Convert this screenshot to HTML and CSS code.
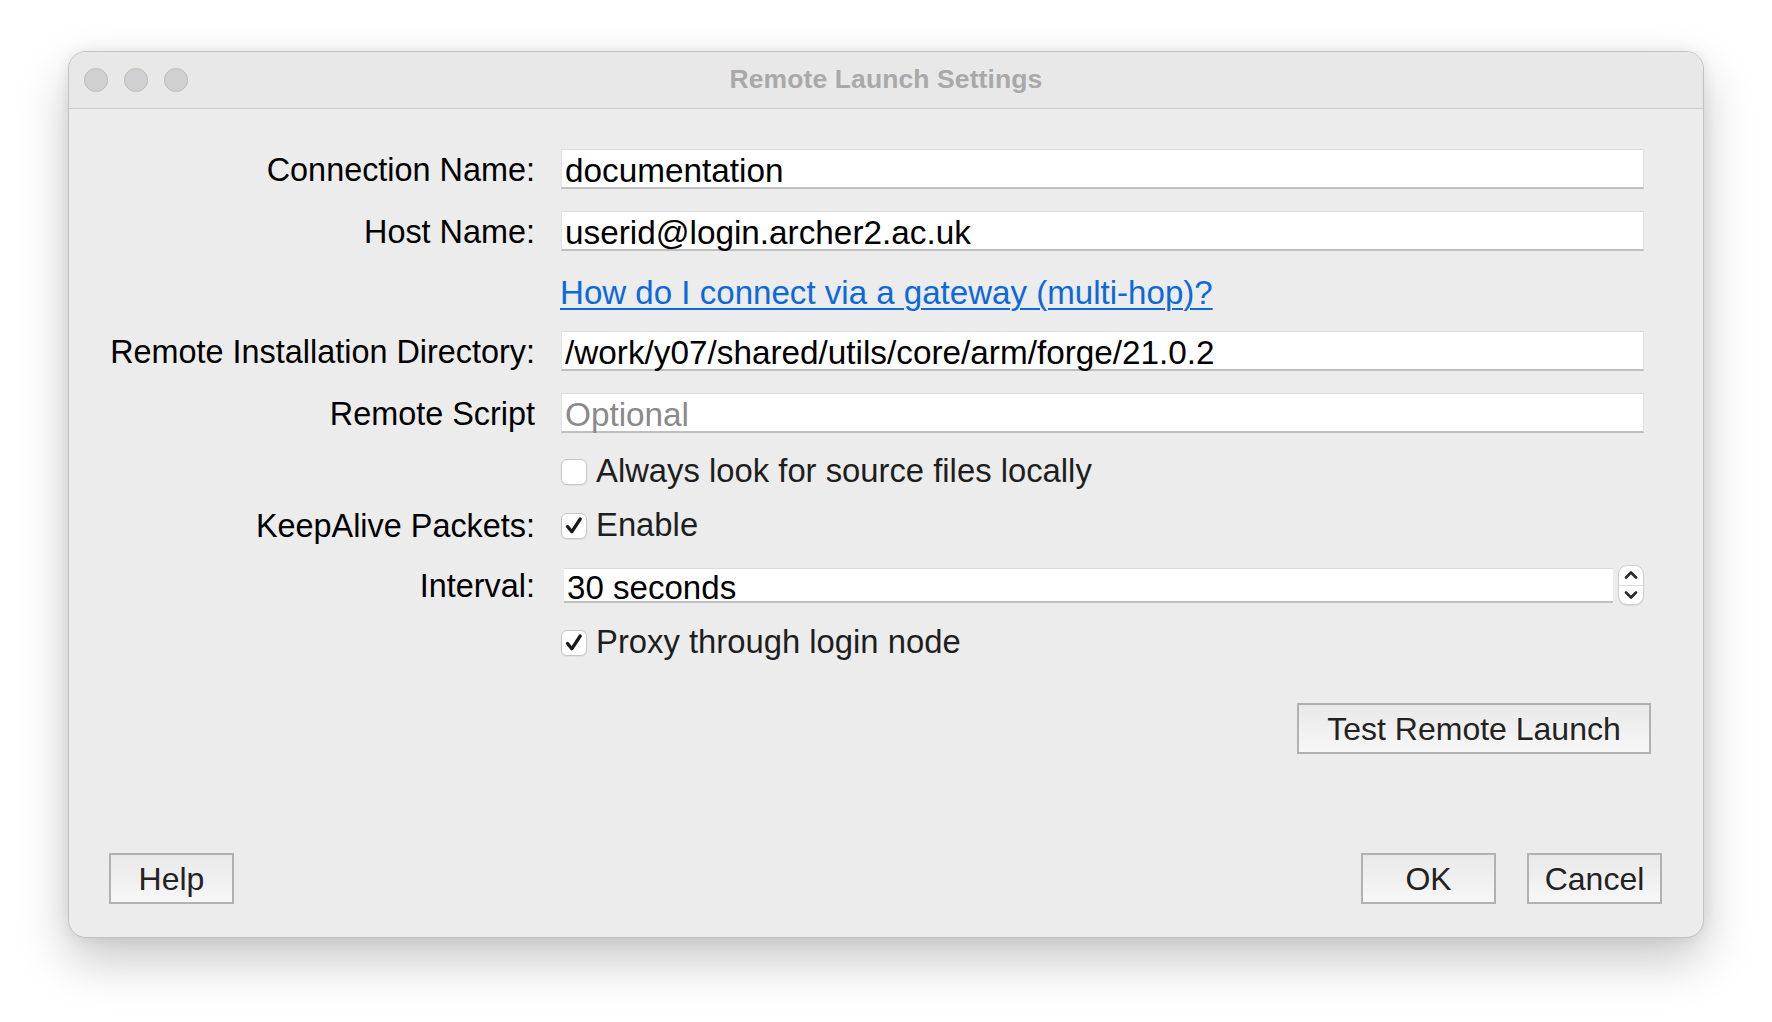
FILE: index.html
```html
<!DOCTYPE html>
<html lang="en">
<head>
<meta charset="utf-8">
<title>Remote Launch Settings</title>
<link rel="stylesheet" href="styles.css">
</head>
<body>
<div class="window">
  <div class="titlebar">
    <div class="lights">
      <span class="light"></span>
      <span class="light"></span>
      <span class="light"></span>
    </div>
    <div class="title">Remote Launch Settings</div>
    <div></div>
  </div>
  <div class="content">
    <div class="row row-1">
      <div class="label">Connection Name:</div>
      <div class="field"><span>documentation</span></div>
    </div>
    <div class="row row-2">
      <div class="label">Host Name:</div>
      <div class="field"><span>userid@login.archer2.ac.uk</span></div>
    </div>
    <div class="row row-link">
      <div class="label"></div>
      <div class="cell"><a class="link" href="#">How do I connect via a gateway (multi-hop)?</a></div>
    </div>
    <div class="row row-3">
      <div class="label">Remote Installation Directory:</div>
      <div class="field"><span>/work/y07/shared/utils/core/arm/forge/21.0.2</span></div>
    </div>
    <div class="row row-4">
      <div class="label">Remote Script</div>
      <div class="field"><span class="placeholder">Optional</span></div>
    </div>
    <div class="row row-check1">
      <div class="label"></div>
      <div class="cell check"><span class="box"></span><span class="check-text">Always look for source files locally</span></div>
    </div>
    <div class="row row-check2">
      <div class="label">KeepAlive Packets:</div>
      <div class="cell check"><span class="box"><svg width="26" height="26" viewBox="0 0 26 26"><path d="M6.5 13.5 L10.8 18.8 L19.2 6" fill="none" stroke="#1a1a1a" stroke-width="3.3" stroke-linecap="round" stroke-linejoin="round"/></svg></span><span class="check-text">Enable</span></div>
    </div>
    <div class="row row-interval">
      <div class="label">Interval:</div>
      <div class="cell interval">
        <div class="interval-field"><span>30 seconds</span></div>
        <div class="spinner">
          <div class="spin-half"><svg width="14" height="10" viewBox="0 0 14 10"><path d="M2 7.5 L7 2.5 L12 7.5" fill="none" stroke="#2a2a2a" stroke-width="2.6" stroke-linecap="round" stroke-linejoin="round"/></svg></div>
          <div class="spin-half spin-down"><svg width="14" height="10" viewBox="0 0 14 10"><path d="M2 2.5 L7 7.5 L12 2.5" fill="none" stroke="#2a2a2a" stroke-width="2.6" stroke-linecap="round" stroke-linejoin="round"/></svg></div>
        </div>
      </div>
    </div>
    <div class="row row-check3">
      <div class="label"></div>
      <div class="cell check"><span class="box"><svg width="26" height="26" viewBox="0 0 26 26"><path d="M6.5 13.5 L10.8 18.8 L19.2 6" fill="none" stroke="#1a1a1a" stroke-width="3.3" stroke-linecap="round" stroke-linejoin="round"/></svg></span><span class="check-text">Proxy through login node</span></div>
    </div>
    <div class="test-row">
      <button class="btn btn-test">Test Remote Launch</button>
    </div>
    <div class="footer">
      <button class="btn btn-help">Help</button>
      <div class="footer-right">
        <button class="btn btn-ok">OK</button>
        <button class="btn btn-cancel">Cancel</button>
      </div>
    </div>
  </div>
</div>
</body>
</html>
```
FILE: styles.css
```css
html, body {
  margin: 0;
  padding: 0;
  background: #ffffff;
}

body {
  width: 1772px;
  height: 1022px;
  padding: 51px 0 0 68px;
  box-sizing: border-box;
  font-family: "Liberation Sans", Arial, sans-serif;
  font-size: 32px;
  color: #000;
}

.window {
  width: 1636px;
  height: 887px;
  box-sizing: border-box;
  border: 1px solid #c2c2c2;
  border-radius: 18px;
  background: #ececec;
  box-shadow: 0 22px 50px rgba(0, 0, 0, 0.22), 0 0 14px rgba(0, 0, 0, 0.08);
  display: flex;
  flex-direction: column;
  overflow: hidden;
}

.titlebar {
  height: 56px;
  border-bottom: 1px solid #cbcbcb;
  background: #e8e8e9;
  display: grid;
  grid-template-columns: 1fr auto 1fr;
  align-items: center;
  flex: none;
}

.lights {
  display: flex;
  gap: 16px;
  padding-left: 15px;
}

.light {
  width: 24px;
  height: 24px;
  box-sizing: border-box;
  border-radius: 50%;
  background: #d1d1d3;
  border: 1px solid #b9b9bb;
}

.title {
  font-weight: bold;
  font-size: 26.5px;
  color: #a9a9a9;
  letter-spacing: 0.1px;
  margin-top: -1px;
}

.content {
  flex: 1;
  display: flex;
  flex-direction: column;
  padding-top: 40px;
}

.row {
  display: flex;
  height: 40px;
}

.label {
  width: 466px;
  margin-right: 26px;
  text-align: right;
  font-size: 32.4px;
  line-height: 40px;
  padding-top: 1px;
  box-sizing: border-box;
  white-space: nowrap;
  flex: none;
}

.field {
  width: 1083px;
  height: 40px;
  box-sizing: border-box;
  background: #fff;
  border-top: 1px solid #dcdcdc;
  border-left: 1px solid #e2e2e2;
  border-right: 1px solid #e2e2e2;
  border-bottom: 2px solid #bfbfbf;
  padding: 4px 3px 0 3px;
  font-size: 33.3px;
  line-height: 33px;
  white-space: nowrap;
}

.placeholder {
  color: #8a8a8a;
}

.row-2 { margin-top: 22px; }
.row-link { margin-top: 22px; }
.row-3 { margin-top: 18px; }
.row-4 { margin-top: 22px; }
.row-check1 { margin-top: 18px; }
.row-check2 { margin-top: 14px; }
.row-interval { margin-top: 20px; }
.row-check3 { margin-top: 17px; }

.cell {
  width: 1083px;
  line-height: 40px;
}

.link {
  color: #0b69dc;
  font-size: 33.1px;
  text-decoration: underline;
  text-decoration-thickness: 2px;
  text-underline-offset: 4px;
  margin-left: -1px;
}

.check {
  display: flex;
  align-items: center;
}

.box {
  width: 26px;
  height: 26px;
  box-sizing: border-box;
  border: 1px solid #c6c6c6;
  border-radius: 6px;
  background: #fff;
  box-shadow: 0 1px 1px rgba(0, 0, 0, 0.06);
  margin-right: 9px;
  margin-top: 1px;
  display: flex;
  align-items: center;
  justify-content: center;
  flex: none;
}

.box svg {
  display: block;
  margin: -1px;
}

.check-text {
  color: #1e1e1e;
  font-size: 32.8px;
  white-space: nowrap;
}

.interval {
  display: flex;
  align-items: center;
}

.interval-field {
  width: 1050px;
  height: 35px;
  margin-left: 3px;
  box-sizing: border-box;
  background: #fff;
  border-top: 1px solid #dcdcdc;
  border-bottom: 2px solid #bfbfbf;
  padding: 2px 3px 0 3px;
  font-size: 33.1px;
  line-height: 33px;
  white-space: nowrap;
}

.spinner {
  width: 26px;
  height: 40px;
  margin-left: 5px;
  box-sizing: border-box;
  border: 1px solid #cfcfcf;
  border-radius: 9px;
  background: #fff;
  box-shadow: 0 1px 1px rgba(0, 0, 0, 0.08);
  display: flex;
  flex-direction: column;
  overflow: hidden;
}

.spin-half {
  flex: 1;
  display: flex;
  align-items: center;
  justify-content: center;
}

.spin-half svg {
  display: block;
}

.spin-down {
  border-top: 1px solid #dedede;
}

.test-row {
  display: flex;
  justify-content: flex-end;
  margin-top: 41px;
  padding-right: 52px;
}

.btn {
  font-family: "Liberation Sans", Arial, sans-serif;
  font-size: 32px;
  color: #222;
  height: 51px;
  box-sizing: border-box;
  border: 2px solid #b1b1b1;
  background: linear-gradient(#e9e9e9, #f7f7f7);
  padding: 2px 0 0 0;
  line-height: 45px;
  text-align: center;
  border-radius: 0;
  margin: 0;
}

.btn-test { width: 354px; }
.btn-help { width: 125px; }
.btn-ok { width: 135px; }
.btn-cancel { width: 135px; }

.footer {
  margin-top: auto;
  display: flex;
  justify-content: space-between;
  padding: 0 41px 33px 40px;
}

.footer-right {
  display: flex;
  gap: 31px;
}
```
